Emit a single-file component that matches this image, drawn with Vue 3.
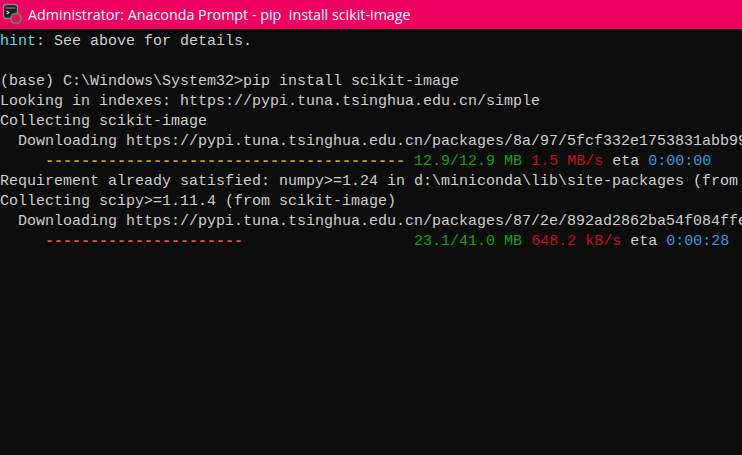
<script setup>
const url = 'https://pypi.tuna.tsinghua.edu.cn/packages/'
const title = 'Administrator: Anaconda Prompt - pip  install scikit-image'
const dashes = (n) => '-'.repeat(n)
const lines = [
  [['cyan', 'hint'], ['', ': See above for details.']],
  [['', ' ']],
  [['', '(base) C:\\Windows\\System32>pip install scikit-image']],
  [['', 'Looking in indexes: https://pypi.tuna.tsinghua.edu.cn/simple']],
  [['', 'Collecting scikit-image']],
  [['', '  Downloading ' + url + '8a/97/5fcf332e1753831abb99ff']],
  [['', '     '], ['yellow dash', dashes(40)], ['', ' '], ['green', '12.9/12.9 MB'], ['', ' '], ['red', '1.5 MB/s'], ['', ' eta '], ['blue', '0:00:00']],
  [['', 'Requirement already satisfied: numpy>=1.24 in d:\\miniconda\\lib\\site-packages (from']],
  [['', 'Collecting scipy>=1.11.4 (from scikit-image)']],
  [['', '  Downloading ' + url + '87/2e/892ad2862ba54f084ffe4a']],
  [['', '     '], ['pink dash', dashes(22)], ['', ' '.repeat(19)], ['green', '23.1/41.0 MB'], ['', ' '], ['red', '648.2 kB/s'], ['', ' eta '], ['blue', '0:00:28']],
]
</script>

<template>
  <div class="window">
    <header class="titlebar">
      <svg class="icon" width="26" height="29" viewBox="0 0 26 29">
        <rect x="3.5" y="4.5" width="14" height="14" rx="3" fill="#1c1b1e" stroke="#8d8790" stroke-width="1.3" />
        <rect x="5.5" y="7" width="10" height="2" fill="#5a5860" />
        <path d="M6.5 11l2.5 1.5-2.5 1.5" fill="none" stroke="#cfcfcf" stroke-width="1.1" />
        <circle cx="16" cy="18.5" r="5" fill="#ee0060" stroke="#5c8a4c" stroke-width="2" />
      </svg>
      <span class="title">{{ title }}</span>
    </header>
    <main class="console">
      <div v-for="(line, i) in lines" :key="i" class="line">
        <span v-for="(seg, j) in line" :key="j" :class="seg[0]">{{ seg[1] }}</span>
      </div>
    </main>
  </div>
</template>

<style scoped>
.window {
  width: 742px;
  height: 455px;
  display: flex;
  flex-direction: column;
  overflow: hidden;
  background: #0c0c0c;
}
.titlebar {
  height: 29px;
  flex: none;
  display: flex;
  align-items: center;
  gap: 2px;
  background: #ee0060;
  color: #fff;
  font: 14.3px "Open Sans", sans-serif;
}
.icon { flex: none; }
.title { white-space: pre; }
.console {
  flex: 1;
  padding-top: 3px;
  font: 15px/20px "Liberation Mono", monospace;
  color: #cccccc;
  overflow: hidden;
}
.line { height: 20px; white-space: pre; }
.dash { font-weight: 700; }
.cyan { color: #61d6d6; }
.yellow { color: #c19c00; }
.green { color: #13a10e; }
.red { color: #c50f1f; }
.pink { color: #e74856; }
.blue { color: #3a96dd; }
</style>
